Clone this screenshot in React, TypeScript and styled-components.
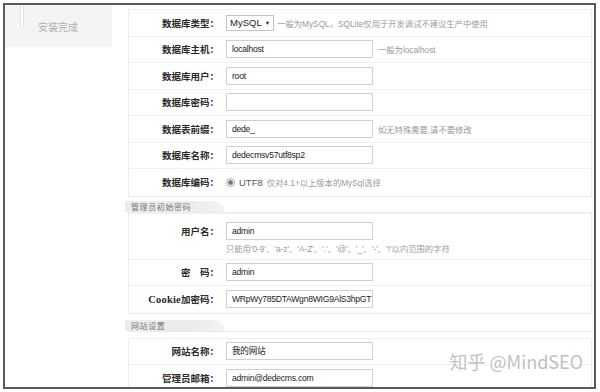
import React from "react";
import styled, { createGlobalStyle } from "styled-components";

const Global = createGlobalStyle`
  html, body {
    margin: 0;
    padding: 0;
    background: #fff;
    font-family: "Liberation Sans", "Noto Sans CJK SC", sans-serif;
  }
`;

const Page = styled.div`
  width: 600px;
  height: 392px;
  box-sizing: border-box;
  padding: 3px 4px 3px 3px;
  overflow: hidden;
`;

const Frame = styled.div`
  position: relative;
  height: 100%;
  box-sizing: border-box;
  border: 2px solid #5a5a5a;
  display: flex;
  overflow: hidden;
`;

const Sidebar = styled.div`
  width: 107px;
  flex-shrink: 0;
`;

const Step = styled.div`
  position: relative;
  height: 42px;
  background: #f4f4f4;
  display: flex;
  align-items: center;
  padding-left: 33px;
  font-size: 10px;
  color: #b0b0b0;
  font-family: "Noto Sans CJK SC", sans-serif;
`;

const StepLine = styled.span`
  position: absolute;
  left: 15px;
  top: 0;
  width: 2px;
  height: 22px;
  background: #fff;
  border-left: 1px solid #e3e3e3;
  border-right: 1px solid #e3e3e3;
`;

const Main = styled.div`
  flex: 1;
  margin-left: 16px;
  margin-right: 2px;
  padding-top: 4px;
  display: flex;
  flex-direction: column;
`;

const Box = styled.div`
  border: 1px solid #ececec;
  border-top-color: #f2f2f2;
`;

const Row = styled.div<{ $h?: number }>`
  display: flex;
  align-items: ${(p) => (p.$h ? "flex-start" : "center")};
  height: ${(p) => p.$h ?? 26.5}px;
  box-sizing: border-box;
  border-bottom: 1px solid #f1f1f1;
  padding-top: ${(p) => (p.$h ? 8 : 0)}px;
  &:last-child {
    border-bottom: none;
  }
`;

const Label = styled.div`
  width: 90px;
  flex-shrink: 0;
  text-align: right;
  padding-right: 7px;
  font-family: "Noto Sans CJK SC", sans-serif;
  font-weight: bold;
  font-size: 9.5px;
  color: #2a2a2a;
  white-space: nowrap;
  line-height: 18px;
`;

const LatinLabel = styled.span`
  font-family: "Liberation Serif", "Noto Sans CJK SC", serif;
  font-size: 10.5px;
  letter-spacing: 0.2px;
`;

const Field = styled.div`
  display: flex;
  flex-direction: column;
  gap: 2px;
`;

const Line = styled.div`
  display: flex;
  align-items: center;
`;

const Input = styled.div`
  width: 147px;
  height: 18px;
  box-sizing: border-box;
  border: 1px solid #cfcfcf;
  padding-left: 5px;
  font-size: 8.6px;
  letter-spacing: -0.25px;
  line-height: 16px;
  color: #222;
  font-family: "Liberation Sans", "Noto Sans CJK SC", sans-serif;
  white-space: nowrap;
  overflow: hidden;
`;

const Select = styled.div`
  height: 16px;
  box-sizing: border-box;
  border: 1px solid #c4c4c4;
  padding: 0 3px;
  font-size: 9.5px;
  line-height: 14px;
  color: #222;
  display: flex;
  align-items: center;
  gap: 3px;
`;

const Caret = styled.span`
  font-size: 5.5px;
`;

const Hint = styled.span<{ $gap?: number }>`
  margin-left: ${(p) => p.$gap ?? 5}px;
  font-size: 8.3px;
  color: #9a9a9a;
  font-family: "Liberation Sans", "Noto Sans CJK SC", sans-serif;
  white-space: nowrap;
`;

const Radio = styled.span`
  display: inline-block;
  width: 7px;
  height: 7px;
  border-radius: 50%;
  border: 1px solid #b5b5b5;
  background: radial-gradient(circle, #777 0 2px, #eee 2.5px);
  margin-right: 4px;
`;

const RadioText = styled.span`
  font-size: 9.5px;
  color: #555;
`;

const SectionHead = styled.div<{ $mt: number; $mb?: number }>`
  margin-top: ${(p) => p.$mt}px;
  margin-bottom: ${(p) => p.$mb ?? 0}px;
  height: 19px;
  border-bottom: 1px solid #ebebeb;
  display: flex;
  align-items: stretch;
`;

const Tab = styled.div`
  width: 94px;
  padding-left: 6px;
  margin-left: -3px;
  background: linear-gradient(to right, #ececec 70%, #f4f4f4);
  border-top-right-radius: 22px 19px;
  display: flex;
  align-items: center;
  font-family: "Noto Sans CJK SC", sans-serif;
  font-size: 8px;
  letter-spacing: 0.6px;
  color: #777;
`;

const Watermark = styled.div`
  position: absolute;
  right: 11px;
  bottom: 13px;
  font-family: "Noto Sans CJK SC", sans-serif;
  font-size: 18px;
  color: rgba(180, 180, 180, 0.85);
  text-shadow: 0 0 1px rgba(255, 255, 255, 0.6);
`;

type FieldRow = { label: React.ReactNode; value: string; hint?: string };

const dbRows: FieldRow[] = [
  { label: "数据库主机：", value: "localhost", hint: "一般为localhost" },
  { label: "数据库用户：", value: "root" },
  { label: "数据库密码：", value: "" },
  { label: "数据表前缀：", value: "dede_", hint: "如无特殊需要,请不要修改" },
  { label: "数据库名称：", value: "dedecmsv57utf8sp2" },
];

const InputRow = ({ row }: { row: FieldRow }) => (
  <Row>
    <Label>{row.label}</Label>
    <Line>
      <Input>{row.value}</Input>
      {row.hint && <Hint>{row.hint}</Hint>}
    </Line>
  </Row>
);

const App = () => {
  return (
    <Page>
      <Global />
      <Frame>
        <Sidebar>
          <Step>
            <StepLine />
            安装完成
          </Step>
        </Sidebar>
        <Main>
          <Box>
            <Row>
              <Label>数据库类型：</Label>
              <Line>
                <Select>
                  MySQL <Caret>▼</Caret>
                </Select>
                <Hint $gap={3}>一般为MySQL，SQLite仅用于开发调试不建议生产中使用</Hint>
              </Line>
            </Row>
            {dbRows.map((r) => (
              <InputRow key={String(r.label)} row={r} />
            ))}
            <Row>
              <Label>数据库编码：</Label>
              <Line>
                <Radio />
                <RadioText>UTF8</RadioText>
                <Hint $gap={4}>仅对4.1+以上版本的MySql选择</Hint>
              </Line>
            </Row>
          </Box>

          <SectionHead $mt={4}>
            <Tab>管理员初始密码</Tab>
          </SectionHead>
          <Box>
            <Row $h={46}>
              <Label>用户名：</Label>
              <Field>
                <Input>admin</Input>
                <Hint $gap={0}>
                  只能用'0-9'、'a-z'、'A-Z'、'.'、'@'、'_'、'-'、'!'以内范围的字符
                </Hint>
              </Field>
            </Row>
            <InputRow row={{ label: "密　码：", value: "admin" }} />
            <InputRow
              row={{
                label: (
                  <>
                    <LatinLabel>Cookie</LatinLabel>加密码：
                  </>
                ),
                value: "WRpWy785DTAWgn8WIG9AlS3hpGT",
              }}
            />
          </Box>

          <SectionHead $mt={6} $mb={6}>
            <Tab>网站设置</Tab>
          </SectionHead>
          <Box>
            <InputRow row={{ label: "网站名称：", value: "我的网站" }} />
            <InputRow row={{ label: "管理员邮箱：", value: "admin@dedecms.com" }} />
          </Box>
        </Main>
        <Watermark>知乎 @MindSEO</Watermark>
      </Frame>
    </Page>
  );
};

export default App;
